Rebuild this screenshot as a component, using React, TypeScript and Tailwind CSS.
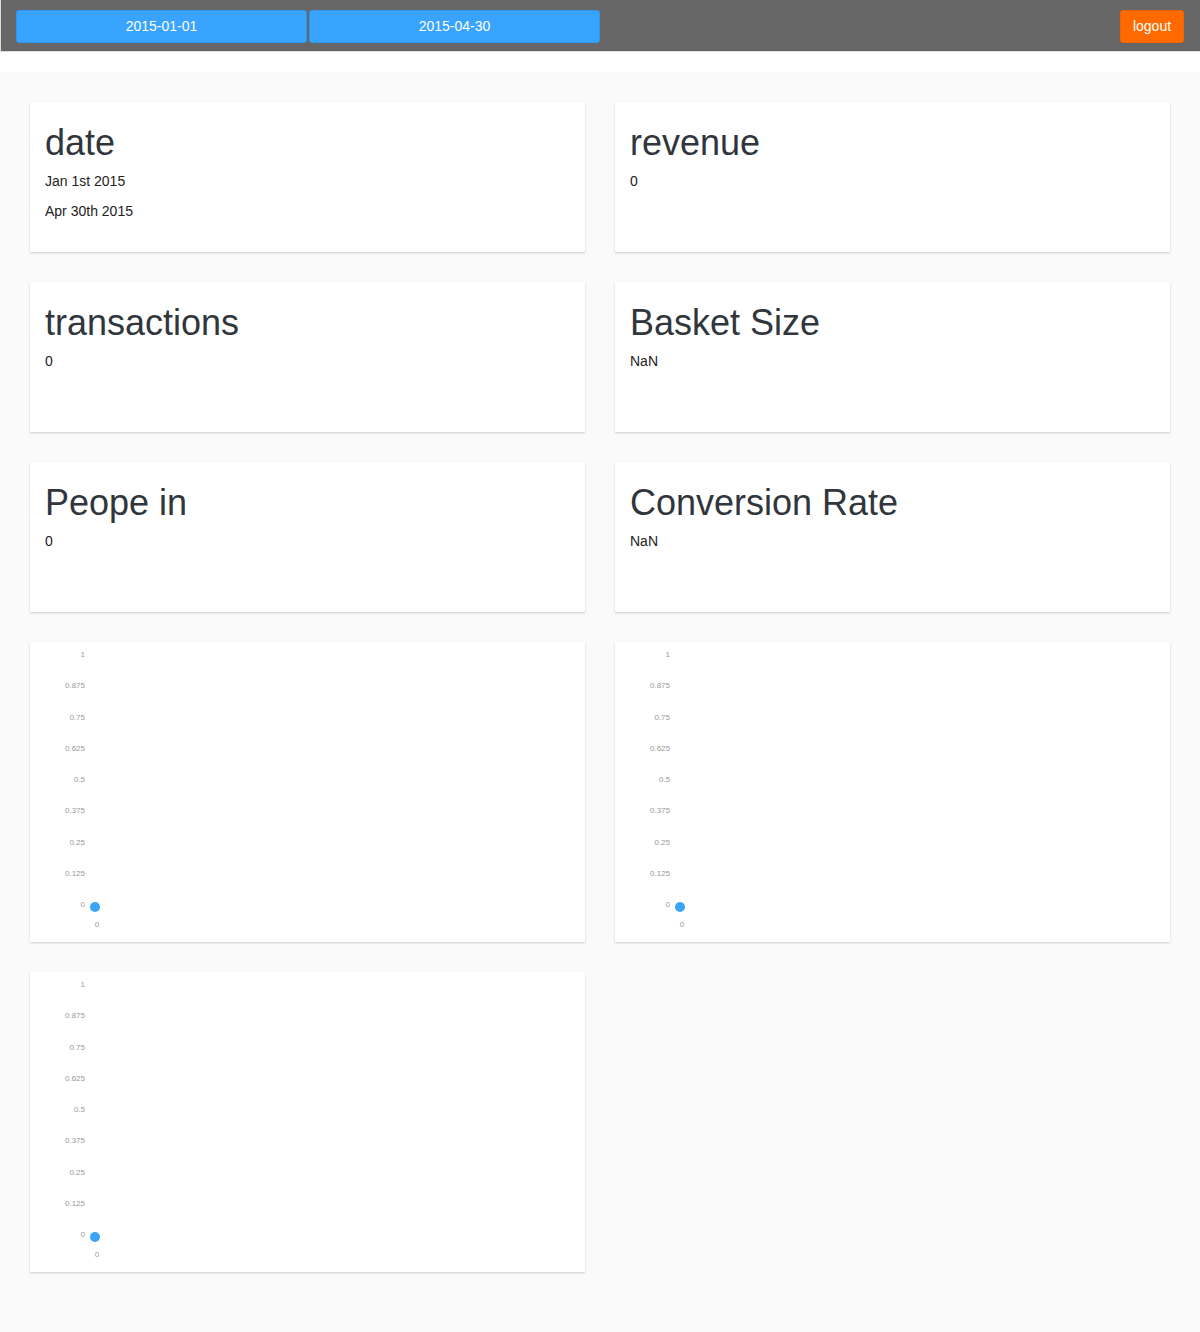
import React from 'react';

const font = { fontFamily: '"Liberation Sans", Arial, sans-serif' };

const ticks = ['1', '0.875', '0.75', '0.625', '0.5', '0.375', '0.25', '0.125', '0'];

const StatCard: React.FC<{ title: string; values: string[] }> = ({ title, values }) => (
  <div className="h-[150px] bg-white px-[15px] pt-[21px] shadow-[0_1px_2px_rgba(0,0,0,0.18)]">
    <h1 className="text-[36px] leading-[40px] text-[#30363c]">{title}</h1>
    <div className="mt-[8px]">
      {values.map((v) => (
        <p key={v} className="mb-[10px] text-[14px] leading-[20px] text-[#222]">
          {v}
        </p>
      ))}
    </div>
  </div>
);

const ChartCard: React.FC = () => (
  <div className="h-[300px] bg-white shadow-[0_1px_2px_rgba(0,0,0,0.18)]">
    <svg width="555" height="300" className="block">
      {ticks.map((t, i) => (
        <text
          key={t}
          x={55}
          y={15 + i * 31.25}
          textAnchor="end"
          fontSize="8"
          fill="#999"
          fontFamily='"Liberation Sans", Arial, sans-serif'
        >
          {t}
        </text>
      ))}
      <circle cx={65} cy={265} r={5} fill="#3ba3f8" />
      <text x={67} y={285} textAnchor="middle" fontSize="8" fill="#999" fontFamily='"Liberation Sans", Arial, sans-serif'>
        0
      </text>
    </svg>
  </div>
);

const App: React.FC = () => {
  return (
    <div className="min-h-[1332px] bg-[#fafafa]" style={font}>
      <header className="flex h-[52px] items-start justify-between border-b border-l border-[#ddd] bg-[#666] pl-[15px] pr-[16px] pt-[10px]">
        <div className="flex gap-[2px]">
          <button className="h-[33px] w-[291px] rounded-[3px] border border-[#2e98f0] bg-[#38a4ff] text-[14px] text-white">
            2015-01-01
          </button>
          <button className="h-[33px] w-[291px] rounded-[3px] border border-[#2e98f0] bg-[#38a4ff] text-[14px] text-white">
            2015-04-30
          </button>
        </div>
        <button className="h-[33px] w-[64px] rounded-[3px] border border-[#f26400] bg-[#ff6a00] text-[14px] text-white">
          logout
        </button>
      </header>
      <div className="h-[20px] bg-white" />
      <main className="grid grid-cols-2 gap-[30px] px-[30px] pt-[30px] pb-[60px]">
        <StatCard title="date" values={['Jan 1st 2015', 'Apr 30th 2015']} />
        <StatCard title="revenue" values={['0']} />
        <StatCard title="transactions" values={['0']} />
        <StatCard title="Basket Size" values={['NaN']} />
        <StatCard title="Peope in" values={['0']} />
        <StatCard title="Conversion Rate" values={['NaN']} />
        <ChartCard />
        <ChartCard />
        <ChartCard />
      </main>
    </div>
  );
};

export default App;
